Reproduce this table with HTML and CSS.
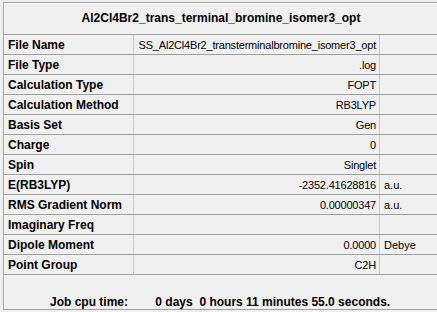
FILE: index.html
```html
<!DOCTYPE html>
<html>
<head>
	<title>Al2Cl4Br2_trans_terminal_bromine_isomer3_opt</title>
	<link rel="stylesheet" href="styles.css">
</head>
<body>
	<div class="panel">
		<div class="title">Al2Cl4Br2_trans_terminal_bromine_isomer3_opt</div>
		<table class="summary">
			<tr><th>File Name</th><td class="val">SS_Al2Cl4Br2_transterminalbromine_isomer3_opt</td><td class="unit"></td></tr>
			<tr><th>File Type</th><td class="val">.log</td><td class="unit"></td></tr>
			<tr><th>Calculation Type</th><td class="val">FOPT</td><td class="unit"></td></tr>
			<tr><th>Calculation Method</th><td class="val">RB3LYP</td><td class="unit"></td></tr>
			<tr><th>Basis Set</th><td class="val">Gen</td><td class="unit"></td></tr>
			<tr><th>Charge</th><td class="val">0</td><td class="unit"></td></tr>
			<tr><th>Spin</th><td class="val">Singlet</td><td class="unit"></td></tr>
			<tr><th>E(RB3LYP)</th><td class="val">-2352.41628816</td><td class="unit">a.u.</td></tr>
			<tr><th>RMS Gradient Norm</th><td class="val">0.00000347</td><td class="unit">a.u.</td></tr>
			<tr><th>Imaginary Freq</th><td class="val"></td><td class="unit"></td></tr>
			<tr><th>Dipole Moment</th><td class="val">0.0000</td><td class="unit">Debye</td></tr>
			<tr><th>Point Group</th><td class="val">C2H</td><td class="unit"></td></tr>
		</table>
		<div class="cpu">
			<span class="cpu-label">Job cpu time:</span>
			<span class="cpu-time">0 days&nbsp; 0 hours 11 minutes 55.0 seconds.</span>
		</div>
	</div>
</body>
</html>
```

FILE: styles.css
```css
body {
	margin: 0;
	background-color: #f0f0f0;
	overflow: hidden;
	font-family: "Liberation Sans", Arial, sans-serif;
	font-size: 12px;
	color: #000;
}

/* cadre du résumé, coupé à droite par la fenêtre */
.panel {
	margin: 2px 0 0 3px;
	width: 434px;
	height: 306px;
	border: 1px solid #a0a0a0;
	border-right: none;
	box-shadow: inset 1px 1px 0 #fff;
	overflow: hidden;
}

.title {
	height: 31px;
	line-height: 30px;
	text-align: center;
	font-weight: bold;
	border-bottom: 1px solid #a0a0a0;
}

.summary {
	border-collapse: collapse;
	width: 434px;
	table-layout: fixed;
}

.summary th,
.summary td {
	height: 19px;
	padding: 0 4px;
	border-bottom: 1px solid #a0a0a0;
	white-space: nowrap;
	overflow: hidden;
}

.summary th {
	width: 121px;
	text-align: left;
	font-weight: bold;
	border-right: 1px solid #c8c8c8;
}

.summary td.val {
	width: 238px;
	text-align: right;
	padding-right: 3px;
	font-size: 11px;
	letter-spacing: -0.2px;
	border-right: 1px solid #c8c8c8;
	box-shadow: 1px 0 0 #fff;
}

.summary td.unit {
	padding-left: 4px;
	font-size: 11px;
}

.cpu {
	padding: 20px 0 0 46px;
	font-weight: bold;
	white-space: nowrap;
}

.cpu-time {
	margin-left: 24px;
}
```
